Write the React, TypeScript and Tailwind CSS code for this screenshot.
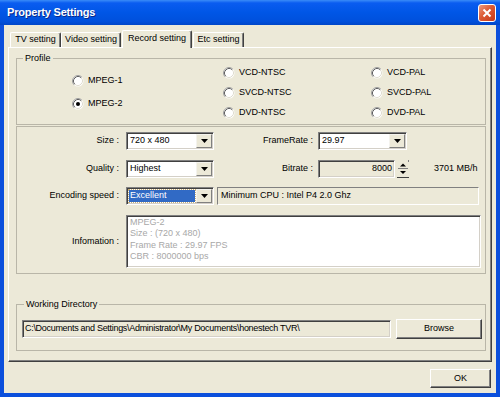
const sunken =
  "border border-t-[#808080] border-l-[#808080] border-b-white border-r-white shadow-[inset_1px_1px_0_#404040,inset_-1px_-1px_0_#d4d0c8]";
const raised =
  "border border-t-white border-l-white border-b-[#404040] border-r-[#404040] shadow-[inset_-1px_-1px_0_#808080]";
const etched = "border border-[#b9b6a8]";

const Arrow = () => (
  <svg width="7" height="4" viewBox="0 0 7 4">
    <path d="M0 0h7L3.5 4z" fill="#000" />
  </svg>
);

const Combo = ({
  value,
  className,
  active,
}: {
  value: string;
  className: string;
  active?: boolean;
}) => (
  <div className={`flex h-[18px] bg-white p-[1px] ${sunken} ${className}`}>
    <div className="flex min-w-0 flex-1 items-center p-[1px]">
      {active ? (
        <span className="flex h-full flex-1 items-center bg-[#316ac5] px-[1px] text-white outline-1 outline-dotted outline-[#c8b078]">
          {value}
        </span>
      ) : (
        <span className="pl-[1px]">{value}</span>
      )}
    </div>
    <div className="flex w-[16px] items-center justify-center border border-t-[#f4f3ee] border-l-[#f4f3ee] border-b-[#808080] border-r-[#808080] bg-[#ece9d8]">
      <Arrow />
    </div>
  </div>
);

const Radio = ({ label, checked }: { label: string; checked?: boolean }) => (
  <div className="flex h-[13px] items-center gap-[4px]">
    <svg width="12" height="12" viewBox="0 0 12 12">
      <circle cx="6" cy="6" r="5.5" fill="#fff" />
      <path d="M2.11 9.89A5.5 5.5 0 0 1 9.89 2.11" stroke="#a0a0a0" fill="none" />
      <path d="M2.82 9.18A4.5 4.5 0 0 1 9.18 2.82" stroke="#606060" fill="none" />
      <path d="M9.18 2.82A4.5 4.5 0 0 1 2.82 9.18" stroke="#e0ddd0" fill="none" />
      {checked && <circle cx="6" cy="6" r="2" fill="#000" />}
    </svg>
    <span>{label}</span>
  </div>
);

const Label = ({ text, className }: { text: string; className: string }) => (
  <div className={`text-right ${className}`}>{text}</div>
);

const tabs = [
  { name: "TV setting", w: "w-[51px]" },
  { name: "Video setting", w: "w-[60px]" },
  { name: "Record setting", w: "w-[70px]", on: true },
  { name: "Etc setting", w: "w-[51px]" },
];

export default function App() {
  return (
    <div className="flex h-[397px] w-[500px] flex-col bg-[#0b4fdc] font-['Liberation_Sans',Arial,sans-serif] text-[9px] text-black">
      {/* title bar */}
      <div className="flex h-[25px] shrink-0 items-center justify-between bg-[linear-gradient(to_bottom,#3a8cf8_0%,#0a5cf0_12%,#0056e6_50%,#0050dc_85%,#0046c8_100%)] pl-[7px] pr-[4px]">
        <span className="text-[11px] font-bold tracking-[-0.2px] text-white [text-shadow:1px_1px_0_#0a2a8a]">
          Property Settings
        </span>
        <div className="flex h-[18px] w-[18px] items-center justify-center rounded-[3px] border border-white bg-[linear-gradient(135deg,#ec9a80,#dc5a34_45%,#c4381a)]">
          <svg width="10" height="10" viewBox="0 0 10 10">
            <path d="M1.5 1.5L8.5 8.5M8.5 1.5L1.5 8.5" stroke="#fff" strokeWidth="2" />
          </svg>
        </div>
      </div>

      {/* body */}
      <div className="mx-[4px] mb-[4px] flex flex-1 flex-col bg-[#ece9d8] pt-[5px]">
        {/* tabs */}
        <div className="flex h-[17px] items-end pl-[6px]">
          {tabs.map((t) =>
            t.on ? (
              <div
                key={t.name}
                className={`relative z-10 -mb-px mx-[1px] flex h-[18px] items-center justify-center rounded-t-[2px] border-l border-t border-r border-l-white border-t-white border-r-[#404040] bg-[#ece9d8] pb-[2px] shadow-[inset_-1px_0_0_#808080] ${t.w}`}
              >
                {t.name}
              </div>
            ) : (
              <div
                key={t.name}
                className={`flex h-[15px] items-center justify-center rounded-t-[2px] border-l border-t border-r border-l-white border-t-white border-r-[#404040] shadow-[inset_-1px_0_0_#808080] ${t.w}`}
              >
                {t.name}
              </div>
            ),
          )}
        </div>

        {/* tab panel */}
        <div className="ml-[4px] flex h-[315px] w-[484px] flex-col border border-t-white border-l-white border-b-[#404040] border-r-[#404040] shadow-[inset_-1px_-1px_0_#808080]">
          {/* profile */}
          <fieldset className={`ml-[7px] mt-[4px] h-[73px] w-[470px] ${etched}`}>
            <legend className="ml-[6px] px-[2px] leading-[12px]">Profile</legend>
            <div className="flex pl-[55px]">
              <div className="mt-[10px] flex w-[151px] flex-col gap-[10px]">
                <Radio label="MPEG-1" />
                <Radio label="MPEG-2" checked />
              </div>
              <div className="mt-[2px] flex w-[148px] flex-col gap-[7px]">
                <Radio label="VCD-NTSC" />
                <Radio label="SVCD-NTSC" />
                <Radio label="DVD-NTSC" />
              </div>
              <div className="mt-[2px] flex flex-col gap-[7px]">
                <Radio label="VCD-PAL" />
                <Radio label="SVCD-PAL" />
                <Radio label="DVD-PAL" />
              </div>
            </div>
          </fieldset>

          {/* record options */}
          <div className={`ml-[7px] mt-[1px] flex h-[148px] w-[470px] flex-col pt-[5px] ${etched}`}>
            <div className="flex h-[18px] items-center">
              <Label text="Size :" className="w-[102px]" />
              <Combo value="720 x 480" className="ml-[7px] w-[88px]" />
              <Label text="FrameRate :" className="w-[99px]" />
              <Combo value="29.97" className="ml-[5px] w-[89px]" />
            </div>
            <div className="mt-[10px] flex h-[18px] items-center">
              <Label text="Quality :" className="w-[102px]" />
              <Combo value="Highest" className="ml-[7px] w-[88px]" />
              <Label text="Bitrate :" className="w-[99px]" />
              <div className={`ml-[5px] flex h-[18px] w-[77px] items-center justify-end bg-[#ece9d8] pr-[2px] ${sunken}`}>
                8000
              </div>
              <svg width="14" height="18" viewBox="0 0 14 18" className="ml-[1px]">
                <path d="M7 3.5L10 6.5H4z" fill="#000" />
                <path d="M2 8.5H12" stroke="#808080" />
                <path d="M4 11H10L7 14z" fill="#000" />
                <path d="M1 17.5H13" stroke="#404040" />
                <path d="M12.5 0V2" stroke="#808080" />
              </svg>
              <span className="ml-[24px]">3701 MB/h</span>
            </div>
            <div className="mt-[9px] flex h-[18px] items-center">
              <Label text="Encoding speed :" className="w-[102px]" />
              <Combo value="Excellent" className="ml-[7px] w-[88px]" active />
              <div className="ml-[3px] flex h-[18px] w-[262px] items-center border border-t-[#808080] border-l-[#808080] border-b-white border-r-white pl-[3px]">
                Minimum CPU : Intel P4 2.0 Ghz
              </div>
            </div>
            <div className="mt-[10px] flex h-[53px] items-center">
              <Label text="Infomation :" className="w-[102px]" />
              <div className={`ml-[7px] h-[53px] w-[355px] bg-white pl-[3px] pt-[1px] leading-[11.3px] text-[#a8a8a8] ${sunken}`}>
                <div>MPEG-2</div>
                <div>Size : (720 x 480)</div>
                <div>Frame Rate : 29.97 FPS</div>
                <div>CBR : 8000000 bps</div>
              </div>
            </div>
          </div>

          {/* working directory */}
          <fieldset className={`ml-[7px] mt-[24px] h-[53px] w-[470px] ${etched}`}>
            <legend className="ml-[7px] px-[2px] leading-[12px]">Working Directory</legend>
            <div className="ml-[5px] mt-[9px] flex h-[20px] items-center">
              <div className={`flex h-[18px] w-[369px] items-center bg-[#ece9d8] pl-[2px] tracking-[-0.3px] ${sunken}`}>
                C:\Documents and Settings\Administrator\My Documents\honestech TVR\
              </div>
              <div className={`ml-[5px] flex h-[20px] w-[86px] items-center justify-center ${raised}`}>
                Browse
              </div>
            </div>
          </fieldset>
        </div>

        {/* footer */}
        <div className="mt-[7px] flex justify-end pr-[5px]">
          <div className={`flex h-[19px] w-[61px] items-center justify-center ${raised}`}>OK</div>
        </div>
      </div>
    </div>
  );
}
